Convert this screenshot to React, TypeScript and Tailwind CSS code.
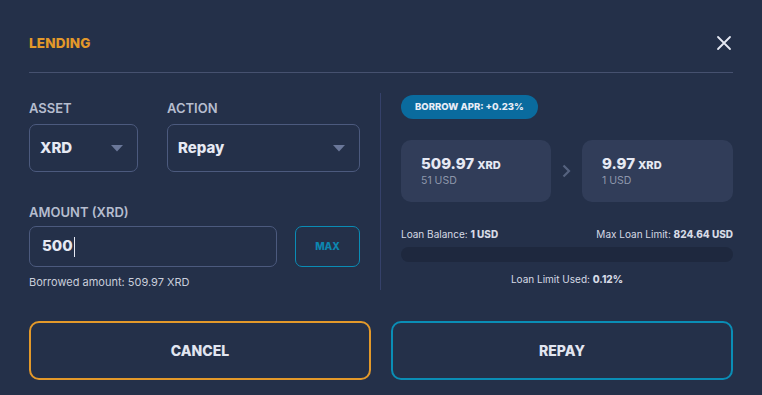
import React from 'react';

const Caret: React.FC = () => (
  <svg width="12" height="7" viewBox="0 0 12 7" className="shrink-0">
    <path d="M0 0 L12 0 L6 6.5 Z" fill="#6a7799" />
  </svg>
);

const App: React.FC = () => {
  return (
    <div
      className="w-[762px] h-[395px] bg-[#243049] px-[29px] text-[#e6e9f3] overflow-hidden"
      style={{ fontFamily: 'Inter, "Noto Sans", sans-serif' }}
    >
      {/* Header */}
      <div className="h-[73px] pt-[14px] flex items-center justify-between border-b border-[#46516f]">
        <h1 className="text-[13.5px] font-extrabold tracking-[0.2px] text-[#e3992a]">LENDING</h1>
        <svg width="16" height="16" viewBox="0 0 16 16" className="mr-[1px]">
          <path d="M2 2 L14 14 M14 2 L2 14" stroke="#e6e9f3" strokeWidth="1.8" strokeLinecap="round" />
        </svg>
      </div>

      {/* Body */}
      <div className="h-[248px] flex">
        {/* Left column */}
        <div className="w-[331px] pt-[27px]">
          <div className="flex gap-[29px]">
            <div className="w-[109px]">
              <div className="h-4 text-[13px] leading-4 font-semibold text-[#b6bdcf]">ASSET</div>
              <div className="mt-[8px] h-[48px] rounded-[7px] border border-[#4c5a7e] flex items-center justify-between pl-[10px] pr-[14px]">
                <span className="text-[15px] font-extrabold">XRD</span>
                <Caret />
              </div>
            </div>
            <div className="w-[193px]">
              <div className="h-4 text-[13px] leading-4 font-semibold text-[#b6bdcf]">ACTION</div>
              <div className="mt-[8px] h-[48px] rounded-[7px] border border-[#4c5a7e] flex items-center justify-between pl-[10px] pr-[14px]">
                <span className="text-[15px] font-extrabold">Repay</span>
                <Caret />
              </div>
            </div>
          </div>

          <div className="mt-[32px] h-4 text-[13px] leading-4 font-semibold text-[#b6bdcf]">AMOUNT (XRD)</div>
          <div className="mt-[6px] flex gap-[18px]">
            <div className="w-[248px] h-[41px] rounded-[7px] border border-[#4c5a7e] flex items-center pl-[12px]">
              <span className="text-[15px] font-extrabold">500</span>
              <span className="ml-[1px] w-px h-[20px] bg-[#e6e9f3]" />
            </div>
            <button className="w-[65px] h-[41px] rounded-[7px] border border-[#0a8cb5] text-[10px] font-extrabold text-[#0d86b0]">
              MAX
            </button>
          </div>
          <div className="mt-[8px] text-[11px] leading-[14px] text-[#c9cedb]">Borrowed amount: 509.97 XRD</div>
        </div>

        {/* Divider */}
        <div className="ml-[20px] mt-[20px] w-px h-[197px] bg-[#35416a]" />

        {/* Right column */}
        <div className="ml-[20px] w-[332px] pt-[22px]">
          <div className="flex w-fit items-center h-[24px] px-[14px] rounded-full bg-[#0a6b9e] text-[9.5px] font-extrabold text-[#e8edf7]">
            BORROW APR: +0.23%
          </div>

          <div className="mt-[21px] flex items-center">
            <div className="w-[150px] h-[62px] rounded-[10px] bg-[#313d59] pl-[20px] pt-[14px]">
              <div className="leading-[18px]">
                <span className="text-[15px] font-extrabold">509.97</span>
                <span className="ml-[3px] text-[11px] font-extrabold">XRD</span>
              </div>
              <div className="text-[10.5px] leading-[14px] text-[#8e97ab]">51 USD</div>
            </div>
            <div className="w-[31px] flex justify-center">
              <svg width="9" height="14" viewBox="0 0 9 14">
                <path d="M1.5 1.5 L7 7 L1.5 12.5" stroke="#55627f" strokeWidth="2.2" fill="none" />
              </svg>
            </div>
            <div className="w-[151px] h-[62px] rounded-[10px] bg-[#313d59] pl-[20px] pt-[14px]">
              <div className="leading-[18px]">
                <span className="text-[15px] font-extrabold">9.97</span>
                <span className="ml-[3px] text-[11px] font-extrabold">XRD</span>
              </div>
              <div className="text-[10.5px] leading-[14px] text-[#8e97ab]">1 USD</div>
            </div>
          </div>

          <div className="mt-[26px] flex justify-between text-[10px] leading-[13px] text-[#d6dae5]">
            <span>
              Loan Balance: <span className="font-extrabold">1 USD</span>
            </span>
            <span>
              Max Loan Limit: <span className="font-extrabold">824.64 USD</span>
            </span>
          </div>
          <div className="mt-[6px] h-[15px] rounded-full bg-[#1e283e]" />
          <div className="mt-[11px] text-center text-[10px] leading-[13px] text-[#d6dae5]">
            Loan Limit Used: <span className="font-extrabold">0.12%</span>
          </div>
        </div>
      </div>

      {/* Actions */}
      <div className="flex gap-[20px]">
        <button className="w-[342px] h-[59px] rounded-[10px] border-2 border-[#e3992a] text-[14px] font-extrabold text-[#e1e5f0]">
          CANCEL
        </button>
        <button className="w-[342px] h-[59px] rounded-[10px] border-2 border-[#0a8db5] text-[14px] font-extrabold text-[#e1e5f0]">
          REPAY
        </button>
      </div>
    </div>
  );
};

export default App;
